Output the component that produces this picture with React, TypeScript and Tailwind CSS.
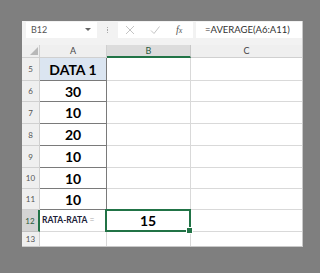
import React from "react";

const rows = [
  { n: "5", h: "h-[23px]", a: "DATA 1", b: "" },
  { n: "6", h: "h-[21px]", a: "30", b: "" },
  { n: "7", h: "h-[22px]", a: "10", b: "" },
  { n: "8", h: "h-[22px]", a: "20", b: "" },
  { n: "9", h: "h-[22px]", a: "10", b: "" },
  { n: "10", h: "h-[21px]", a: "10", b: "" },
  { n: "11", h: "h-[21px]", a: "10", b: "" },
];

export default function App() {
  return (
    <div
      className="w-[320px] h-[273px] bg-[#7f7f7f] pt-[21px] pl-[22px]"
      style={{ fontFamily: "Lato, 'Liberation Sans', sans-serif" }}
    >
      <div className="w-[280px] h-[225px] bg-[#f2f2f2] flex flex-col border-r border-b border-[#c9c9c9] box-content">
        {/* Formula bar */}
        <div className="h-[24px] flex items-start pt-[1px]">
          <div className="ml-[4px] w-[71px] h-[16px] bg-white flex items-center justify-between pl-[5px] pr-[6px]">
            <span className="text-[9px] text-[#555]">B12</span>
            <svg width="6" height="4" viewBox="0 0 6 4">
              <path d="M0 0 L6 0 L3 3 Z" fill="#666" />
            </svg>
          </div>
          <div className="w-[21px] h-[16px] flex flex-col items-center justify-center gap-[1px]">
            <div className="w-[1.5px] h-[1.5px] bg-[#aaa]" />
            <div className="w-[1.5px] h-[1.5px] bg-[#aaa]" />
            <div className="w-[1.5px] h-[1.5px] bg-[#aaa]" />
          </div>
          <div className="w-[75px] h-[16px] bg-white flex items-center">
            <svg width="10" height="10" viewBox="0 0 10 10" className="ml-[7px]">
              <path d="M1 1 L9 9 M9 1 L1 9" stroke="#c4c4c4" strokeWidth="1" />
            </svg>
            <svg width="10" height="10" viewBox="0 0 10 10" className="ml-[15px]">
              <path d="M1 5.5 L4 8.5 L9.5 1.5" stroke="#c4c4c4" strokeWidth="1" fill="none" />
            </svg>
            <span
              className="ml-[16px] text-[10px] italic text-[#555] leading-none"
              style={{ fontFamily: "'Liberation Serif', serif" }}
            >
              f<span className="text-[8px]">x</span>
            </span>
          </div>
          <div className="ml-[3px] flex-1 h-[16px] bg-white flex items-center pl-[9px]">
            <span className="text-[9.5px] text-[#333]">=AVERAGE(A6:A11)</span>
          </div>
        </div>

        {/* Sheet */}
        <div className="flex flex-col bg-white">
          {/* header row */}
          <div className="flex h-[13px]">
            <div className="w-[18px] bg-[#efefef] border-r border-b border-[#d0d0d0] relative">
              <svg width="8" height="8" viewBox="0 0 8 8" className="absolute right-[1px] bottom-[2px]">
                <path d="M8 0 L8 8 L0 8 Z" fill="#b8b8b8" />
              </svg>
            </div>
            <div className="w-[67px] bg-[#efefef] border-r border-b border-[#d0d0d0] flex items-center justify-center text-[9px] text-[#444]">
              A
            </div>
            <div className="w-[84px] bg-[#dcdcdc] border-r border-[#c8c8c8] border-b-2 border-b-[#217346] flex items-center justify-center text-[9px] text-[#2a5a3c]">
              B
            </div>
            <div className="flex-1 bg-[#efefef] border-b border-[#d0d0d0] flex items-center justify-center text-[9px] text-[#444]">
              C
            </div>
          </div>

          {rows.map((r) => (
            <div key={r.n} className={`flex ${r.h}`}>
              <div className="w-[18px] bg-[#efefef] border-r border-b border-[#d0d0d0] flex items-center justify-center text-[8px] text-[#555]">
                {r.n}
              </div>
              <div
                className={`w-[67px] border-r border-b border-[#7a7a7a] flex items-center justify-center text-[14px] font-bold text-black ${
                  r.n === "5" ? "bg-[#dbe5f1]" : "bg-white"
                }`}
              >
                {r.a}
              </div>
              <div className="w-[84px] border-r border-b border-[#d9d9d9]" />
              <div className="flex-1 border-b border-[#d9d9d9]" />
            </div>
          ))}

          {/* row 12 */}
          <div className="flex h-[22px]">
            <div className="w-[18px] bg-[#d4d4d4] border-r-2 border-r-[#217346] border-b border-[#c0c0c0] flex items-center justify-center text-[8px] text-[#2a5a3c]">
              12
            </div>
            <div className="w-[66px] border-b border-[#d9d9d9] flex items-center pl-[2px] text-[8.5px] font-bold text-[#1c2238] whitespace-nowrap">
              RATA-RATA <span className="ml-[2px] font-normal text-[#aaa]">=</span>
            </div>
            <div className="w-[85px] border-r border-b border-[#d9d9d9] relative flex items-center justify-center text-[14px] font-bold text-black">
              15
              <div className="absolute left-[-1px] top-[-1px] right-[-1px] bottom-[-1px] border-2 border-[#217346]" />
              <div className="absolute right-[-3px] bottom-[-3px] w-[5px] h-[5px] bg-[#217346] border border-white box-content" />
            </div>
            <div className="flex-1 border-b border-[#d9d9d9]" />
          </div>

          {/* row 13 */}
          <div className="flex h-[14px]">
            <div className="w-[18px] bg-[#efefef] border-r border-[#d0d0d0] flex items-center justify-center text-[8px] text-[#555]">
              13
            </div>
            <div className="w-[67px] border-r border-[#d9d9d9]" />
            <div className="w-[84px] border-r border-[#d9d9d9]" />
            <div className="flex-1" />
          </div>
        </div>
      </div>
    </div>
  );
}
